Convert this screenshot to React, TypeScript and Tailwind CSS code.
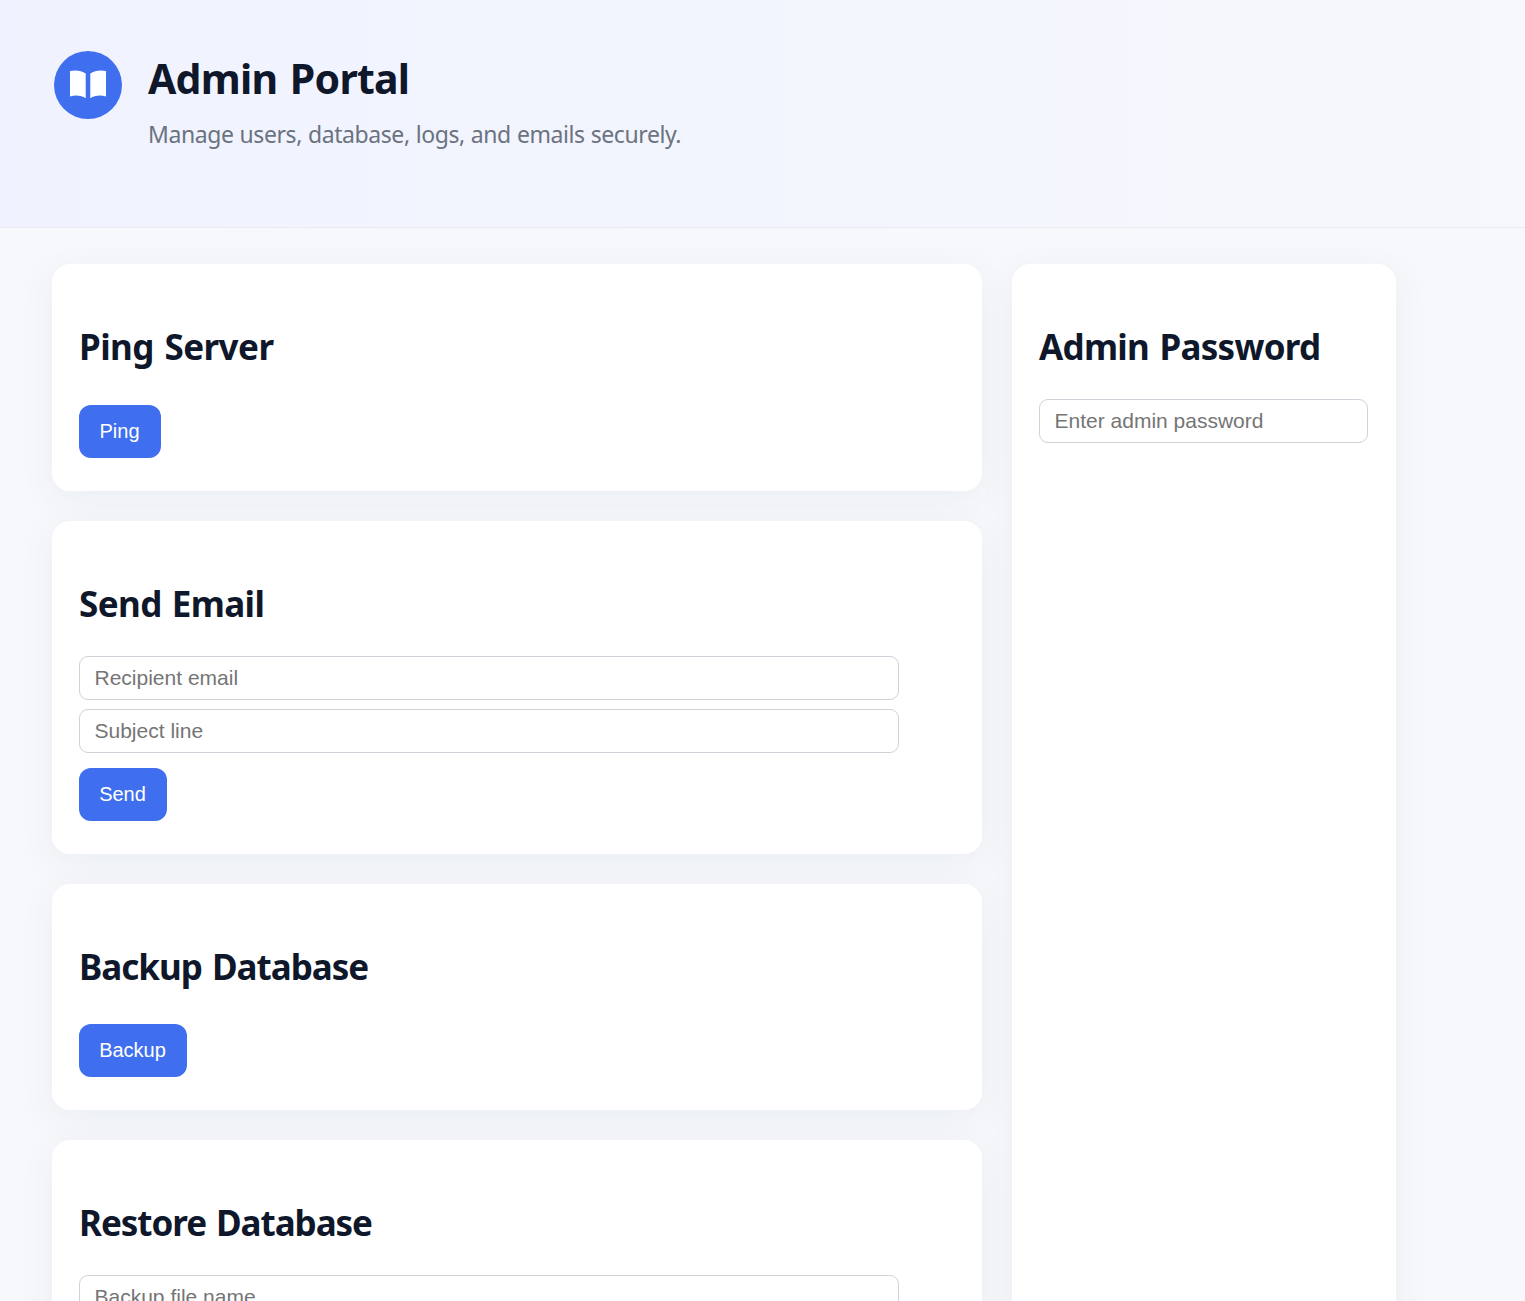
import type { ReactNode } from "react";

const headingFont = "font-['Segoe_UI','Noto_Sans','Open_Sans',sans-serif]";

function Card({ title, tracking, children }: { title: string; tracking: string; children?: ReactNode }) {
  return (
    <section className="rounded-[18px] bg-white px-[27px] pt-[57px] pb-[33px] shadow-[0_9px_36px_rgba(5,60,60,0.06)]">
      <h2
        className={`h-[54px] whitespace-nowrap text-[35px] leading-[52px] font-bold text-[#0f172a] ${tracking}`}
      >
        {title}
      </h2>
      {children}
    </section>
  );
}

function Button({ label, className }: { label: string; className: string }) {
  return (
    <button
      className={`block h-[53px] rounded-[12px] bg-[#3f6fee] pr-[7px] pb-[2px] font-['Liberation_Sans',sans-serif] text-[20px] text-white ${className}`}
    >
      {label}
    </button>
  );
}

function Field({ placeholder, className }: { placeholder: string; className: string }) {
  return (
    <input
      placeholder={placeholder}
      className={`block h-[44px] rounded-[9px] border border-[#d1d1d9] bg-white px-[14.5px] font-['Liberation_Sans',sans-serif] text-[21px] placeholder:text-[#757575] ${className}`}
    />
  );
}

export default function App() {
  return (
    <div className={`h-[1301px] overflow-hidden bg-[#f7f8fc] ${headingFont}`}>
      <header className="flex h-[228px] gap-[26px] border-b border-[#e9ebf4] bg-linear-to-r from-[#f0f3ff] to-[#f6f8fc] pt-[51px] pl-[54px]">
        <svg viewBox="0 0 68 68" className="h-[68px] w-[68px] shrink-0">
          <circle cx="34" cy="34" r="34" fill="#3f6fee" />
          <path
            d="M16 20C21.500 18.800 27.500 19.500 31.700 22.500V47.300C27.500 44.300 21.500 43.800 16 45.500ZM52 20C46.500 18.800 40.500 19.500 36.300 22.500V47.300C40.500 44.300 46.500 43.800 52 45.500Z"
            fill="#fff"
          />
        </svg>
        <div>
          <h1 className="-mt-px text-[41px] leading-[56px] font-bold tracking-[-0.75px] text-[#0f172a] [word-spacing:2.5px]">
            Admin Portal
          </h1>
          <p className="mt-[12px] text-[23px] leading-[32px] tracking-[-0.42px] text-[#6b7280] [word-spacing:0.5px]">
            Manage users, database, logs, and emails securely.
          </p>
        </div>
      </header>
      <main className="grid grid-cols-[930px_384px] gap-[30px] pt-[36px] pl-[52px]">
        <div className="flex flex-col gap-[30px]">
          <Card title="Ping Server" tracking="tracking-[-0.55px] [word-spacing:2px]">
            <Button label="Ping" className="mt-[30px] w-[82px] pl-[6px]" />
          </Card>
          <Card title="Send Email" tracking="tracking-[-0.6px] [word-spacing:1.5px]">
            <Field placeholder="Recipient email" className="mt-[24px] w-[820px]" />
            <Field placeholder="Subject line" className="mt-[9px] w-[820px]" />
            <Button label="Send" className="mt-[15px] w-[88px] pl-[6px]" />
          </Card>
          <Card title="Backup Database" tracking="tracking-[-1px] [word-spacing:2px]">
            <Button label="Backup" className="mt-[29px] w-[108px] pl-[6px]" />
          </Card>
          <Card title="Restore Database" tracking="tracking-[-1.05px] [word-spacing:2px]">
            <Field placeholder="Backup file name" className="mt-[24px] w-[820px]" />
          </Card>
        </div>
        <Card title="Admin Password" tracking="tracking-[-0.72px] [word-spacing:2px]">
          <Field placeholder="Enter admin password" className="mt-[24px] w-[329px]" />
        </Card>
      </main>
    </div>
  );
}
